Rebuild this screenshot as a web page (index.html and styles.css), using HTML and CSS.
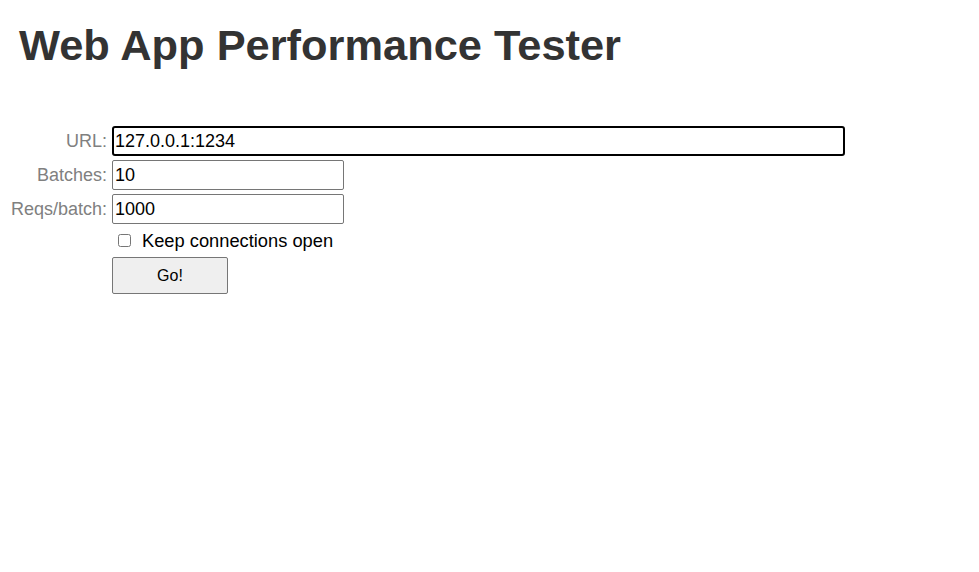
FILE: index.html
```html
<!DOCTYPE html>
<html lang="en">
<head>
    <meta charset="UTF-8">
    <meta name="viewport" content="width=device-width, initial-scale=1.0">
    <title>Web App Performance Tester</title>
    <link rel="stylesheet" href="styles.css">
</head>

<body>
    <h1 class="title">Web App Performance Tester</h1>
    <form class="tester">
        <label class="field_name" for="url">URL:</label>
        <input class="field field_url" id="url" type="text" value="127.0.0.1:1234">

        <label class="field_name" for="batches">Batches:</label>
        <input class="field field_short" id="batches" type="text" value="10">

        <label class="field_name" for="reqs">Reqs/batch:</label>
        <input class="field field_short" id="reqs" type="text" value="1000">

        <span></span>
        <label class="keep"><input class="keep_box" type="checkbox">Keep connections open</label>

        <span></span>
        <div><button class="go" type="button">Go!</button></div>
    </form>
</body>
</html>
```

FILE: styles.css
```css
body{
    margin: 0;
    font-family: "Liberation Sans", Arial, sans-serif;
    font-size: 18px;
}
.title{
    margin: 21px 0 0 0;
    padding-left: 19px;
    font-size: 43.4px;
    font-weight: bold;
    color: #333;
}
/* 表单：左边标签，右边输入框 */
.tester{
    display: grid;
    grid-template-columns: 98px 1fr;
    column-gap: 4px;
    row-gap: 4px;
    margin-top: 56px;
    padding-left: 10px;
    align-items: center;
}
.field_name{
    text-align: right;
    color: #808080;
    padding-right: 1px;
}
.field{
    box-sizing: border-box;
    height: 30px;
    margin: 0;
    padding: 0 2px;
    font-family: inherit;
    font-size: 18px;
    color: #000;
    border: 1px solid #767676;
    border-radius: 2px;
}
.field_url{
    width: 733px;
    border: 2px solid #000;
    border-radius: 3px;
    padding: 0 1px;
}
.field_short{
    width: 232px;
}
.keep{
    display: flex;
    align-items: center;
    height: 25px;
    font-size: 18.3px;
    color: #000;
}
.keep_box{
    width: 13px;
    height: 13px;
    margin: 0 11px 0 6px;
}
.go{
    width: 116px;
    height: 37px;
    margin: 0;
    font-family: inherit;
    font-size: 16px;
    background-color: #efefef;
    border: 1px solid #767676;
    border-radius: 2px;
    color: #000;
}
```
